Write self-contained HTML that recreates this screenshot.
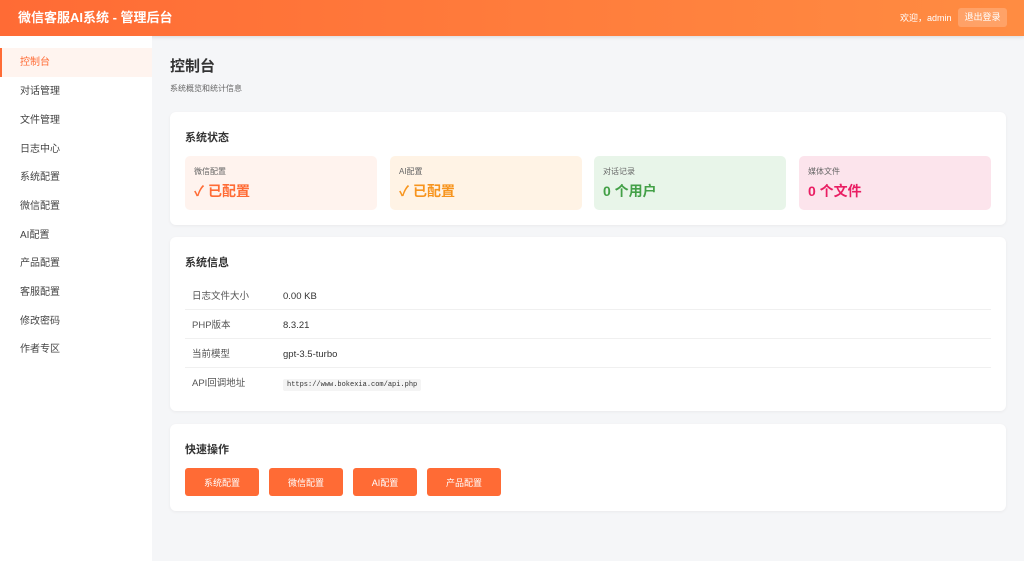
<!DOCTYPE html>
<html><head><meta charset="utf-8"><style>
*{margin:0;padding:0;box-sizing:border-box}
body{width:1024px;height:561px;overflow:hidden;background:#f5f6f8;font-family:"Liberation Sans","Noto Sans CJK SC",sans-serif;color:#333;position:relative}
.hd{position:absolute;left:0;top:0;width:1024px;height:36px;background:linear-gradient(90deg,#ff6b35,#ff8c42);box-shadow:0 1px 4px rgba(0,0,0,.12);color:#fff}
.hd .t{position:absolute;left:18px;top:8px;font-size:13px;font-weight:bold;line-height:20px}
.hd .w{position:absolute;left:900px;top:11px;font-size:9px;line-height:14px}
.hd .b{position:absolute;left:958px;top:8px;width:49px;height:19px;background:rgba(255,255,255,.2);border-radius:3px;font-size:9px;text-align:center;line-height:19px}
.sb{position:absolute;left:0;top:36px;width:152px;height:525px;background:#fff}
.it{position:absolute;left:0;width:152px;height:29px;line-height:30px;padding-left:20px;font-size:10px;color:#444}
.it.a{background:#fff4ef;color:#ff6b35;border-left:2px solid #ff6b35;padding-left:18px}
.card{position:absolute;left:170px;width:836px;background:#fff;border-radius:6px;box-shadow:0 1px 3px rgba(0,0,0,.05)}
.h{position:absolute;left:15px;font-size:11px;font-weight:bold;color:#333;line-height:14px}
.st{position:absolute;top:44px;width:192px;height:54px;border-radius:5px}
.st .l{position:absolute;left:9px;top:10px;font-size:8px;color:#666;line-height:11px}
.st .v{position:absolute;left:9px;top:26px;font-size:14px;font-weight:bold;line-height:18px}
.row{position:absolute;left:15px;width:806px;height:29px;border-bottom:1px solid #f0f0f0;font-size:9.5px;line-height:31px}
.row .k{position:absolute;left:7px;top:0;color:#555}
.row .x{position:absolute;left:98px;top:0;color:#333}
code{font-family:"Liberation Mono",monospace;font-size:7px;background:#f4f4f4;padding:2px 4px;border-radius:2px}
.btn{position:absolute;top:44px;height:28px;background:#ff6b35;color:#fff;font-size:9px;text-align:center;line-height:30px;border-radius:3px}
</style></head><body>
<div class="hd"><div class="t">微信客服AI系统 - 管理后台</div><div class="w">欢迎，admin</div><div class="b">退出登录</div></div>
<div class="sb">
<div class="it a" style="top:12px">控制台</div>
<div class="it" style="top:41px">对话管理</div>
<div class="it" style="top:70px">文件管理</div>
<div class="it" style="top:99px">日志中心</div>
<div class="it" style="top:127px">系统配置</div>
<div class="it" style="top:156px">微信配置</div>
<div class="it" style="top:185px">AI配置</div>
<div class="it" style="top:213px">产品配置</div>
<div class="it" style="top:242px">客服配置</div>
<div class="it" style="top:271px">修改密码</div>
<div class="it" style="top:299px">作者专区</div>
</div>
<div style="position:absolute;left:170px;top:57px;font-size:15px;font-weight:bold;color:#333;line-height:20px">控制台</div>
<div style="position:absolute;left:170px;top:83px;font-size:8px;color:#666;line-height:12px">系统概览和统计信息</div>
<div class="card" style="top:112px;height:113px">
<div class="h" style="top:19px">系统状态</div>
<div class="st" style="left:15px;background:#fff3ee"><div class="l">微信配置</div><div class="v" style="color:#ff6b35">✓ 已配置</div></div>
<div class="st" style="left:220px;background:#fff3e5"><div class="l">AI配置</div><div class="v" style="color:#f7941d">✓ 已配置</div></div>
<div class="st" style="left:424px;background:#e8f5e9"><div class="l">对话记录</div><div class="v" style="color:#43a047">0 个用户</div></div>
<div class="st" style="left:629px;background:#fce4ec"><div class="l">媒体文件</div><div class="v" style="color:#e91e63">0 个文件</div></div>
</div>
<div class="card" style="top:237px;height:174px">
<div class="h" style="top:19px">系统信息</div>
<div class="row" style="top:44px"><span class="k">日志文件大小</span><span class="x">0.00 KB</span></div>
<div class="row" style="top:73px"><span class="k">PHP版本</span><span class="x">8.3.21</span></div>
<div class="row" style="top:102px"><span class="k">当前模型</span><span class="x">gpt-3.5-turbo</span></div>
<div class="row" style="top:131px;border:none"><span class="k">API回调地址</span><span class="x"><code>https://www.bokexia.com/api.php</code></span></div>
</div>
<div class="card" style="top:424px;height:87px">
<div class="h" style="top:19px">快速操作</div>
<div class="btn" style="left:15px;width:74px">系统配置</div>
<div class="btn" style="left:99px;width:74px">微信配置</div>
<div class="btn" style="left:183px;width:64px">AI配置</div>
<div class="btn" style="left:257px;width:74px">产品配置</div>
</div>
</body></html>
